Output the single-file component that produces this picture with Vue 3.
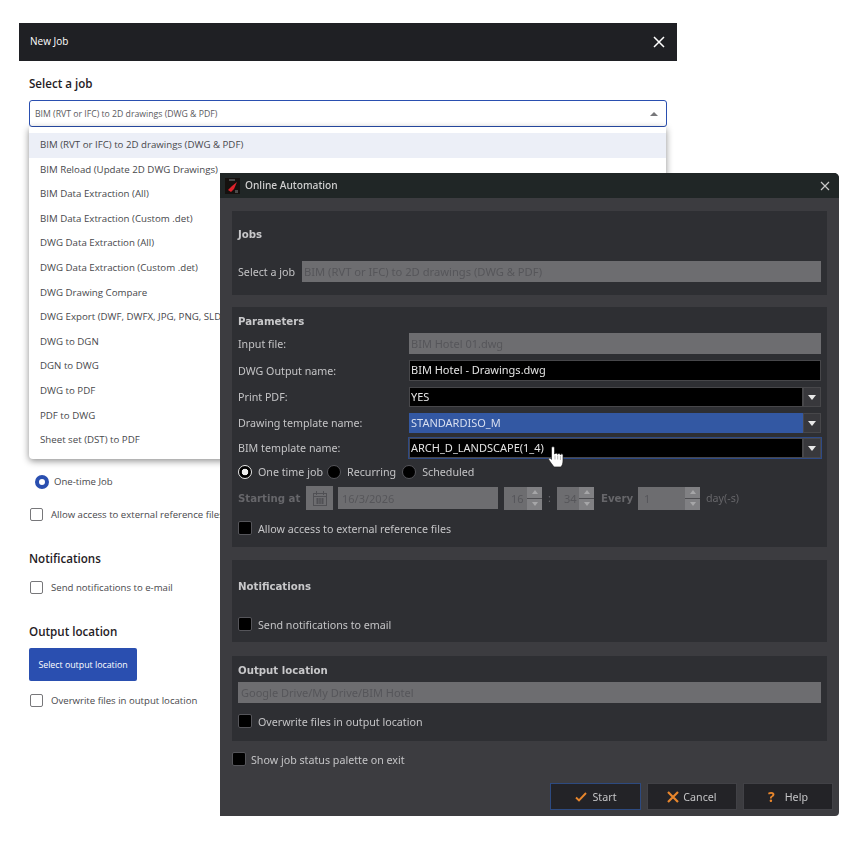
<template>
  <div class="stage">
    <!-- web dialog behind -->
    <section class="web-dialog">
      <header class="web-head">
        <span class="web-name">New Job</span>
        <svg class="web-close" width="12" height="12" viewBox="0 0 12 12"><path d="M1 1l10 10M11 1L1 11" stroke="#fff" stroke-width="1.5" /></svg>
      </header>
      <div class="web-body">
        <h3 class="web-title first">Select a job</h3>
        <div class="web-select">
          <span>{{ jobs[0] }}</span>
          <i class="web-caret"></i>
        </div>
        <ul class="web-menu">
          <li v-for="(job, i) in jobs" :key="job" :class="{ active: i === 0 }">{{ job }}</li>
        </ul>
        <label class="web-radio"><i></i>One-time Job</label>
        <label class="web-check"><i></i>Allow access to external reference files</label>
        <h3 class="web-title notif">Notifications</h3>
        <label class="web-check tight"><i></i>Send notifications to e-mail</label>
        <h3 class="web-title output">Output location</h3>
        <button class="web-btn">Select output location</button>
        <label class="web-check last"><i></i>Overwrite files in output location</label>
      </div>
    </section>

    <!-- desktop window on top -->
    <section class="win">
      <header class="win-head">
        <svg class="win-logo" width="15" height="16" viewBox="0 0 15 16">
          <rect width="15" height="16" fill="#15110f" />
          <path d="M12 4L9 11 6 14 3 12 7 8z" fill="#e0222a" />
          <path d="M4 1h6v2H4zM10 12h3v3h-3z" fill="#4a4a4a" />
        </svg>
        <span class="win-title">Online Automation</span>
        <svg class="win-close" width="10" height="10" viewBox="0 0 10 10"><path d="M1 1l8 8M9 1L1 9" stroke="#c9c9c9" stroke-width="1.2" /></svg>
      </header>

      <div class="win-body">
        <div class="panel jobs">
          <h4>Jobs</h4>
          <div class="job-row">
            <span class="lbl job-lbl">Select a job</span>
            <div class="field off grow">{{ jobs[0] }}</div>
          </div>
        </div>

        <div class="panel params">
          <h4>Parameters</h4>
          <div class="rows">
            <div v-for="row in paramRows" :key="row.label" class="row">
              <span class="lbl">{{ row.label }}</span>
              <div class="combo" :class="row.cls">
                <div class="field grow" :class="row.kind">{{ row.value }}</div>
                <div v-if="row.drop" class="drop"><i></i></div>
              </div>
            </div>
          </div>

          <div class="radios">
            <label class="radio on"><i></i><span>One time job</span></label>
            <label class="radio"><i></i><span>Recurring</span></label>
            <label class="radio"><i></i><span>Scheduled</span></label>
          </div>

          <div class="sched">
            <b class="dim start-lbl">Starting at</b>
            <div class="cal">
              <svg width="16" height="17" viewBox="0 0 16 17" fill="none" stroke="#505054">
                <rect x="1.5" y="3.5" width="13" height="12" />
                <path d="M4.5 1v4M11.500 1v4M1.500 6.500h13M4 9h8M4 11h8M4 13h8M5.500 8v6M8 8v6M10.500 8v6" />
              </svg>
            </div>
            <div class="field off date">16/3/2026</div>
            <div class="spin hour"><span>16</span><div class="arrows"><i class="up"></i><i class="down"></i></div></div>
            <span class="colon">:</span>
            <div class="spin mins"><span>34</span><div class="arrows"><i class="up"></i><i class="down"></i></div></div>
            <b class="dim every">Every</b>
            <div class="spin days"><span>1</span><div class="arrows"><i class="up"></i><i class="down"></i></div></div>
            <span class="dim-reg">day(-s)</span>
          </div>

          <label class="check access"><i></i><span>Allow access to external reference files</span></label>
        </div>

        <div class="panel notif-panel">
          <h4>Notifications</h4>
          <label class="check notif-check"><i></i><span>Send notifications to email</span></label>
        </div>

        <div class="panel out-panel">
          <h4>Output location</h4>
          <div class="field off out-field">Google Drive/My Drive/BIM Hotel</div>
          <label class="check access"><i></i><span>Overwrite files in output location</span></label>
        </div>

        <label class="check palette"><i></i><span>Show job status palette on exit</span></label>

        <div class="actions">
          <button class="act primary">
            <svg width="12" height="10" viewBox="0 0 12 10"><path d="M1 5.500l3 3L11 1" fill="none" stroke="#e8862c" stroke-width="1.900" /></svg>
            Start
          </button>
          <button class="act">
            <svg width="12" height="12" viewBox="0 0 12 12"><path d="M1 1l10 10M11 1L1 11" stroke="#e8862c" stroke-width="2.200" /></svg>
            Cancel
          </button>
          <button class="act">
            <b class="q">?</b>
            Help
          </button>
        </div>
      </div>

      <!-- hand pointer hovering the BIM template combo -->
      <svg class="hand" width="16" height="22" viewBox="0 0 16 22">
        <path d="M3.500 2a1.500 1.500 0 0 1 3 0V8h.5a1.300 1.300 0 0 1 2.500.3h.3a1.300 1.300 0 0 1 2.500.5h.3a1.200 1.200 0 0 1 2.400.7V15c0 3-1 4.500-2 6H6C4.500 19 2.500 16.500.8 13.800c-.7-1.200.7-2.400 1.800-1.400l.9 1z" fill="#fff" stroke="#1c1c1c" stroke-width=".7" />
        <path d="M7 9.500v4M9.700 9.500v4M12.400 10v4" stroke="#9a9a9a" stroke-width=".7" />
      </svg>
    </section>
  </div>
</template>

<script setup>
const jobs = [
  'BIM (RVT or IFC) to 2D drawings (DWG & PDF)',
  'BIM Reload (Update 2D DWG Drawings)',
  'BIM Data Extraction (All)',
  'BIM Data Extraction (Custom .det)',
  'DWG Data Extraction (All)',
  'DWG Data Extraction (Custom .det)',
  'DWG Drawing Compare',
  'DWG Export (DWF, DWFX, JPG, PNG, SLD)',
  'DWG to DGN',
  'DGN to DWG',
  'DWG to PDF',
  'PDF to DWG',
  'Sheet set (DST) to PDF',
]

const paramRows = [
  { label: 'Input file:', value: 'BIM Hotel 01.dwg', kind: 'off', cls: 'h21' },
  { label: 'DWG Output name:', value: 'BIM Hotel - Drawings.dwg', kind: 'black', cls: 'h21' },
  { label: 'Print PDF:', value: 'YES', kind: 'black', drop: true },
  { label: 'Drawing template name:', value: 'STANDARDISO_M', kind: 'blue', drop: true },
  { label: 'BIM template name:', value: 'ARCH_D_LANDSCAPE(1_4)', kind: 'black', drop: true, cls: 'hover' },
]
</script>

<style>
html, body {
  background: #fff;
}
</style>

<style scoped>
.stage {
  position: relative;
  width: 858px;
  height: 848px;
  overflow: hidden;
  background: #fff;
  font-family: "Open Sans", "Noto Sans", sans-serif;
}

/* web dialog */
.web-dialog {
  width: 658px;
  margin-left: 19px;
  padding-top: 23px;
  color: #3d3d40;
}
.web-head {
  height: 38px;
  display: flex;
  align-items: center;
  justify-content: space-between;
  padding: 0 12px 0 11px;
  background: #1f2024;
  color: #fff;
  font-size: 10px;
}
.web-name { margin-bottom: 2px; }
.web-body {
  padding: 0 10px;
  display: flex;
  flex-direction: column;
  align-items: flex-start;
}
.web-title {
  margin: 0;
  font-size: 11.6px;
  line-height: 16px;
  font-weight: 600;
  color: #1f2024;
}
.web-title.first { margin: 15px 0 8px 0; }
.web-title.notif { margin: 30px 0 0 0; }
.web-title.output { margin: 30px 0 0 0; }
.web-select {
  box-sizing: border-box;
  width: 638px;
  height: 27px;
  display: flex;
  align-items: center;
  justify-content: space-between;
  padding: 0 8px 0 5px;
  border: 1px solid #2a4fb0;
  border-radius: 3px;
  font-size: 8.7px;
  color: #5a5a5e;
}
.web-caret {
  width: 0;
  height: 0;
  border: 4px solid transparent;
  border-top: 0;
  border-bottom: 4px solid #77777a;
}
.web-menu {
  width: 637px;
  height: 332px;
  box-sizing: border-box;
  margin: 0;
  padding: 6px 0 0;
  list-style: none;
  background: #fff;
  border-radius: 0 0 4px 4px;
  box-shadow: 0 2px 7px rgba(0, 0, 0, 0.45);
}
.web-menu li {
  height: 24.6px;
  padding-left: 11px;
  line-height: 23.5px;
  font-size: 9.7px;
  color: #48484c;
}
.web-menu li.active { background: #eceff7; }
.web-radio,
.web-check {
  display: flex;
  align-items: center;
  font-size: 9.6px;
  color: #48484c;
  white-space: nowrap;
}
.web-radio {
  margin: 16px 0 0 6px;
  height: 13px;
}
.web-radio i {
  box-sizing: border-box;
  width: 14px;
  height: 14px;
  margin-right: 5px;
  border: 4px solid #2a4fb0;
  border-radius: 50%;
  background: #fff;
}
.web-check {
  margin: 20px 0 0 1px;
  height: 13px;
}
.web-check i {
  box-sizing: border-box;
  width: 13px;
  height: 13px;
  margin-right: 8px;
  border: 1.5px solid #77777a;
  border-radius: 2px;
}
.web-check.tight { margin-top: 14px; }
.web-check.last { margin-top: 13px; }
.web-btn {
  width: 108px;
  height: 33px;
  margin-top: 8px;
  padding: 0;
  border: 0;
  border-radius: 2px;
  background: #2a4fb0;
  color: #fff;
  font-family: inherit;
  font-size: 8.8px;
}

/* desktop window */
.win {
  position: absolute;
  left: 220px;
  top: 173px;
  width: 619px;
  height: 643px;
  background: #3c3c40;
  border-radius: 0 5px 4px 0;
  font-family: "Noto Sans", "Open Sans", sans-serif;
  color: #c4c4c6;
  font-size: 10.7px;
  filter: blur(0.35px);
}
.win-head {
  height: 25px;
  display: flex;
  align-items: center;
  padding: 0 9px 0 5px;
  background: #202626;
  border-radius: 0 5px 0 0;
}
.win-logo { margin-right: 5px; }
.win-title {
  flex: 1;
  margin-bottom: 2px;
  color: #d0d0d0;
  font-size: 10.2px;
  font-weight: 500;
}
.win-body {
  padding: 13px 12px 0;
}
.panel {
  padding: 0 6px;
  background: #2e2f33;
}
.panel h4 {
  margin: 0;
  height: 14px;
  line-height: 16px;
  font-family: "DejaVu Sans", sans-serif;
  font-size: 10.2px;
  font-weight: 700;
  color: #c8c8ca;
}
.jobs {
  height: 84px;
  box-sizing: border-box;
  padding-top: 16px;
  margin-bottom: 12px;
}
.job-row {
  display: flex;
  align-items: center;
  margin-top: 20px;
}
.job-lbl { width: 64px; flex: none; }
.params {
  height: 240px;
  box-sizing: border-box;
  padding-top: 7px;
  margin-bottom: 13px;
}
.rows {
  margin-top: 5px;
  display: flex;
  flex-direction: column;
  gap: 6px;
}
.row {
  display: flex;
  align-items: center;
}
.row:last-child { margin-top: -1px; }
.row .lbl { width: 171px; flex: none; }
.combo {
  flex: 1;
  display: flex;
  height: 20px;
}
.combo.h21 { height: 21px; }
.combo.hover {
  box-shadow: 0 0 0 1px #2e4a86;
}
.field {
  box-sizing: border-box;
  height: 100%;
  display: flex;
  align-items: center;
  padding: 0 2px;
  font-size: 11px;
  white-space: nowrap;
}
.grow { flex: 1; min-width: 0; }
.job-row .field {
  height: 21px;
  font-size: 11.2px;
}
.field.off {
  background: #6d6d70;
  color: #56565a;
}
.field.black {
  background: #000;
  border: 1px solid #47474a;
  padding: 0 1px 2px;
  color: #e4e4e4;
}
.field.blue {
  background: #3358a3;
  padding-bottom: 2px;
  color: #d8dff0;
}
.drop {
  width: 18px;
  flex: none;
  display: flex;
  align-items: center;
  justify-content: center;
  background: #38383c;
  outline: 1px solid #47474a;
  outline-offset: -1px;
}
.drop i {
  width: 0;
  height: 0;
  border: 4px solid transparent;
  border-bottom: 0;
  border-top: 5px solid #e8e8e8;
}
.radios {
  display: flex;
  align-items: center;
  height: 14px;
  margin-top: 7px;
}
.radio {
  display: flex;
  align-items: center;
  margin-right: 6px;
}
.radio.on { margin-right: 4px; }
.radio i {
  box-sizing: border-box;
  width: 14px;
  height: 14px;
  margin-right: 6px;
  border: 1px solid #55555a;
  border-radius: 50%;
  background: #000;
}
.radio.on i {
  border: 1px solid #e6e6e6;
  background: radial-gradient(circle, #eee 0 3px, #000 3.6px);
}
.sched {
  display: flex;
  align-items: center;
  height: 24px;
  margin-top: 7px;
}
.dim {
  color: #66666a;
  font-family: "DejaVu Sans", sans-serif;
  font-size: 10.2px;
}
.start-lbl { width: 68px; flex: none; }
.cal {
  width: 27px;
  height: 24px;
  flex: none;
  display: flex;
  align-items: center;
  justify-content: center;
  background: #6d6d70;
}
.field.date {
  width: 160px;
  height: 22px;
  flex: none;
  margin-left: 5px;
  padding-left: 4px;
}
.spin {
  height: 23px;
  display: flex;
  flex: none;
  background: #6d6d70;
  color: #56565a;
  font-size: 11px;
}
.spin span {
  flex: 1;
  display: flex;
  align-items: center;
  padding-left: 7px;
}
.arrows {
  width: 15px;
  display: flex;
  flex-direction: column;
  gap: 1px;
  background: #4e4e52;
}
.arrows i {
  flex: 1;
  display: flex;
  align-items: center;
  justify-content: center;
  background: #808083;
}
.arrows i::before {
  content: "";
  border: 3px solid transparent;
}
.arrows .up::before {
  border-top: 0;
  border-bottom: 4px solid #a6a6a8;
}
.arrows .down::before {
  border-bottom: 0;
  border-top: 4px solid #a6a6a8;
}
.hour { width: 38px; margin-left: 6px; }
.colon {
  width: 15px;
  text-align: center;
  color: #66666a;
}
.mins { width: 37px; }
.every { width: 37px; margin-left: 7px; }
.days { width: 62px; }
.days span { padding-left: 6px; }
.dim-reg {
  margin-left: 6px;
  color: #66666a;
}
.check {
  display: flex;
  align-items: center;
  height: 14px;
}
.check span { margin-top: 2px; }
.check i {
  box-sizing: border-box;
  width: 14px;
  height: 14px;
  margin-right: 6px;
  flex: none;
  border: 1px solid #55555a;
  border-radius: 2px;
  background: #000;
}
.access { margin-top: 11px; }
.notif-panel {
  height: 82px;
  box-sizing: border-box;
  padding-top: 19px;
  margin-bottom: 14px;
}
.notif-check { margin-top: 24px; }
.out-panel {
  height: 85px;
  box-sizing: border-box;
  padding-top: 7px;
  margin-bottom: 11px;
}
.out-field {
  height: 21px;
  margin-top: 5px;
  padding-left: 3px;
}
.palette { margin-bottom: 17px; }
.palette i { margin-right: 5px; }
.actions {
  display: flex;
  justify-content: flex-end;
  gap: 6px;
  margin-right: -6px;
}
.act {
  box-sizing: border-box;
  width: 90px;
  height: 27px;
  display: flex;
  align-items: center;
  justify-content: center;
  gap: 4px;
  padding: 0;
  border: 1px solid #414146;
  background: #232327;
  color: #c4c4c6;
  font-family: inherit;
  font-size: 10.7px;
}
.act.primary { width: 91px; border-color: #2d4a80; gap: 6px; }
.q {
  color: #e8862c;
  font-size: 14px;
  line-height: 1;
  margin-right: 6px;
}
.hand {
  position: absolute;
  left: 328px;
  top: 273px;
}
</style>
